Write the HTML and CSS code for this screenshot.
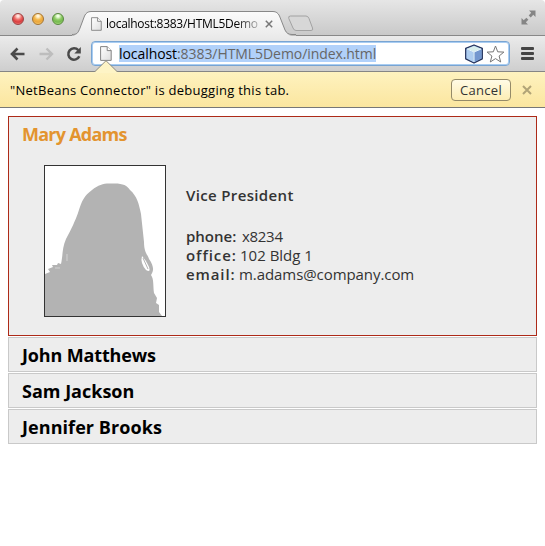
FILE: index.html
```
<!DOCTYPE html>
<html lang="en">
<head>
<meta charset="utf-8">
<title>localhost:8383/HTML5Demo/index.html</title>
<link rel="stylesheet" href="styles.css">
</head>
<body>
<svg width="0" height="0" class="defs" aria-hidden="true">
  <defs>
    <linearGradient id="tabfill" x1="0" y1="0" x2="0" y2="1"><stop offset="0" stop-color="#fbfbfb"/><stop offset="1" stop-color="#ebebeb"/></linearGradient>
    <linearGradient id="page" x1="0" y1="0" x2="1" y2="1"><stop offset="0" stop-color="#fff"/><stop offset="1" stop-color="#ddd"/></linearGradient>
    <symbol id="doc" viewBox="0 0 12 15"><path d="M.6.6h6.600l4 4v9.800H.6z" fill="url(#page)" stroke="#848484"/><path d="M7.200.6v4h4" fill="#fff" stroke="#848484"/></symbol>
  </defs>
</svg>
<header class="tabstrip">
  <div class="lights"><i class="light red"></i><i class="light amber"></i><i class="light green"></i></div>
  <div class="tab">
    <svg class="tab-shape" width="224" height="25" viewBox="0 0 224 25"><path d="M0 24.500C5 24.500 6 22 8 17L12.500 5Q14.500 .5 19 .5H201Q205.500 .5 207.500 5L213 19Q215 24.500 220 24.500H224V25H0Z" fill="url(#tabfill)"/><path d="M0 23.500C5 23.500 6 22 8 17L12.500 5Q14.500 .5 19 .5H201Q205.500 .5 207.500 5L213 19Q215 23.500 220 23.500H224" fill="none" stroke="#888"/></svg>
    <svg class="doc-tab" width="11" height="14"><use href="#doc"/></svg>
    <span class="tab-title">localhost:8383/HTML5Demo</span>
    <svg class="tab-close" width="8" height="8" viewBox="0 0 8 8"><path d="M.8.8l6.400 6.400M7.200.8L.8 7.200" stroke="#777" stroke-width="1.500"/></svg>
  </div>
  <svg class="newtab" width="28" height="17" viewBox="0 0 28 17"><path d="M3.500 1H19Q21 1 22 3.500L25.500 13Q26.500 15.500 24 15.500H9Q7 15.500 6 13L1.800 3.500Q1 1 3.500 1Z" fill="#d7d7d7" stroke="#a2a2a2"/></svg>
  <svg class="expand" width="15" height="15" viewBox="0 0 15 15"><path d="M8 .5h6.500V7l-2.200-2.200-2.600 2.600-2-2 2.500-2.600zM.5 8v6.500H7l-2.200-2.200 2.600-2.600-2-2-2.700 2.500z" fill="#858585"/></svg>
</header>
<nav class="toolbar">
  <svg class="back" width="15" height="14" viewBox="0 0 15 14"><path d="M7.500 1.500L2 7l5.500 5.500M2 7h12.500" fill="none" stroke="#4a4a4a" stroke-width="2.600"/></svg>
  <svg class="forward" width="15" height="14" viewBox="0 0 15 14"><path d="M7.500 1.500L13 7l-5.500 5.500M13 7H.5" fill="none" stroke="#bdbdbd" stroke-width="2.400"/></svg>
  <svg class="reload" width="16" height="16" viewBox="0 0 16 16"><path d="M12.300 4.200A5.700 5.700 0 1 0 13.300 10.200" fill="none" stroke="#4a4a4a" stroke-width="2.500"/><path d="M14.800 1v6.500H8.300z" fill="#4a4a4a"/></svg>
  <div class="omnibox">
    <svg class="doc-url" width="12" height="15"><use href="#doc"/></svg>
    <span class="url"><b>localhost</b>:8383/HTML5Demo/index.html</span>
    <svg class="cube" width="20" height="20" viewBox="0 0 20 20"><path d="M10 1l8.300 3.300v10.500L10 19l-8.300-4.200V4.300z" fill="#8fb0dd" stroke="#26345c" stroke-width="1.300" stroke-linejoin="round"/><path d="M10 2l7 2.700-7 3-7-3z" fill="#d9efed"/><path d="M2.600 5.400L9.500 8.300V18l-6.900-3.700z" fill="#aecdf0"/><path d="M10.200 8.300l7.200-2.900v8.900L10.200 18z" fill="#7397cf"/><path d="M3 5l7 3 7-3M10 8v10" fill="none" stroke="#e8f6fb"/></svg>
    <svg class="star" width="19" height="18" viewBox="0 0 19 18"><path d="M9.500 1l2.200 5.800 6.200.3-4.800 3.900 1.600 6-5.200-3.400L4.300 17l1.600-6-4.800-3.900 6.200-.3z" fill="#fff" stroke="#777" stroke-linejoin="round"/></svg>
  </div>
  <div class="menu"><i></i><i></i><i></i></div>
</nav>
<div class="infobar">
  <svg class="pointer" width="24" height="13" viewBox="0 0 24 13"><path d="M0 13V12L1 11.500 12 .7 23 11.500 24 12V13Z" fill="#fef4c6"/><path d="M0 11.500H1L12 .7 23 11.500h1" fill="none" stroke="#8c8a80"/></svg>
  <span class="message">"NetBeans Connector" is debugging this tab.</span>
  <button class="cancel"><span>Cancel</span></button>
  <svg class="dismiss" width="10" height="10" viewBox="0 0 10 10"><path d="M1 1l8 8M9 1L1 9" stroke="#b1a477" stroke-width="2"/></svg>
</div>
<main>
  <section class="card open">
    <h2><span class="n1">Mary Adams</span></h2>
    <div class="detail">
      <svg class="photo" width="120" height="150" viewBox="0 0 120 150"><path d="M0 108L5 106 3 103 8 101 7 99 12 99 13 97 16 98C18 89 17 82 21 73C27 62 30 55 33 47C37 34 39 30 47 24C54 18 60 17 67 17.500C77 17 82 19 85 24C92 30 94 38 96 48L99 76C99 87 103 89 104 93C109 100 109 105 106 109C109 113 108 120 109 127L112 132 111 137 114 139 114 146 117 150H0Z" fill="#b3b3b3"/><path d="M97 90q-2 7 4 14 5 3 3-3-3-7-7-11z" fill="#fff"/><path d="M98 92l5 11" stroke="#b3b3b3"/><path d="M10 102l5 0M22 88v7" stroke="#d2d2d2"/></svg>
      <div class="info">
        <p class="role"><b class="wrole">Vice President</b></p>
        <p><b class="w1">phone:</b><span class="v1">x8234</span></p>
        <p><b class="w2">office:</b><span class="v2">102 Bldg 1</span></p>
        <p><b class="w3">email:</b><span class="v3">m.adams@company.com</span></p>
      </div>
    </div>
  </section>
  <section class="card"><h2><span class="n2">John Matthews</span></h2></section>
  <section class="card"><h2><span class="n3">Sam Jackson</span></h2></section>
  <section class="card"><h2><span class="n4">Jennifer Brooks</span></h2></section>
</main>
</body>
</html>
```
FILE: styles.css
```
* { box-sizing: border-box; }
body { margin: 0; height: 546px; background: #fff; color: #000; overflow: hidden; font-family: "Open Sans", "Noto Sans", sans-serif; }
svg { display: block; flex: none; }
.defs { position: absolute; }
.tabstrip { height: 36px; display: flex; border-bottom: 1px solid #888; background: linear-gradient(#e6e6e6, #c9c9c9); border-radius: 4px 4px 0 0; }
.lights { display: flex; gap: 8px; padding: 13px 0 0 12px; width: 72px; flex: none; }
.light { width: 12px; height: 12px; border-radius: 50%; border: 1px solid; }
.red { background: radial-gradient(circle at 50% 20%, #ffe3dc 0 10%, #ee6b66 40%, #d93c3e 65%, #f99a91); border-color: #9b4142; }
.amber { background: radial-gradient(circle at 50% 20%, #fff5d9 0 10%, #f4b94c 40%, #eaa43b 65%, #ffe78c); border-color: #a57330; }
.green { background: radial-gradient(circle at 50% 20%, #f0ffe2 0 10%, #8fcc66 40%, #74b84f 65%, #ccf59b); border-color: #57883e; }
.tab { position: relative; width: 220px; height: 25px; margin-top: 11px; padding-left: 19px; display: flex; align-items: center; flex: none; }
.tab-shape { position: absolute; left: 0; top: 0; }
.doc-tab, .tab-title, .tab-close { position: relative; }
.tab-title { width: 154px; margin-left: 4px; font-size: 12px; line-height: 20px; white-space: nowrap; letter-spacing: -.28px; mask-image: linear-gradient(90deg, #000 84%, rgba(0,0,0,.2)); }
.tab-close { margin-left: 5px; }
.newtab { margin: 15px 0 0 -5px; }
.expand { margin: 10px 9px 0 auto; }
.toolbar { height: 36px; display: flex; align-items: center; padding-left: 10px; background: linear-gradient(#ebebeb, #cecece); border-bottom: 1px solid #858585; }
.forward { margin-left: 14px; }
.reload { margin-left: 12px; }
.omnibox { width: 419px; height: 25px; margin-left: 9px; display: flex; align-items: center; background: #fff; border: 1px solid #78a4d2; box-shadow: inset 0 0 0 1px #a9cdf2; border-radius: 4px; padding: 0 1px 0 8px; }
.url { margin-left: 7px; background: #b1d1fa; color: #666; height: 17px; line-height: 17px; font-size: 14px; letter-spacing: -.07px; width: 257px; white-space: nowrap; }
.url b { color: #000; font-weight: 400; }
.cube { margin-left: auto; }
.star { margin: 0 3px 0 2px; }
.menu { display: flex; flex-direction: column; gap: 2px; margin-left: 11px; }
.menu i { width: 13px; height: 3px; background: #454545; border-radius: 1px; }
.infobar { position: relative; height: 36px; display: flex; align-items: center; padding-left: 10px; background: linear-gradient(#fef2bf, #fbe69f); border-bottom: 1px solid #777; font-size: 13px; }
.pointer { position: absolute; left: 94px; top: -12px; }
.message { white-space: nowrap; letter-spacing: .27px; }
.cancel { width: 60px; height: 22px; padding: 0; margin-left: auto; border: 1px solid #958b69; border-radius: 4px; background: linear-gradient(#fffbe6, #fdedb4); font: 13px "Open Sans", sans-serif; line-height: 18px; letter-spacing: .3px; color: #333; }
.dismiss { margin: 0 13px 0 11px; }
main { padding: 8px; display: flex; flex-direction: column; gap: 1px; }
.card { height: 35px; border: 1px solid #c9c9c9; background: #ededed; padding-left: 13px; }
.open { height: 220px; border-color: #ad2a18; }
h2 { margin: 0; font: 700 18px/34px "Open Sans", sans-serif; white-space: nowrap; }
.n1 { letter-spacing: -.75px; }
.n2 { letter-spacing: -.15px; }
.n4 { letter-spacing: .07px; }
.open h2 { color: #e3942f; }
.detail { display: flex; padding: 14px 0 0 22px; }
.photo { box-sizing: content-box; border: 1px solid #333; background: #fff; }
.info { margin-left: 20px; padding-top: 21px; color: #333; font-size: 15px; line-height: 19px; white-space: nowrap; }
.info p { margin: 0; }
.info .role { margin-bottom: 22px; }
.info b { display: inline-block; font-weight: 600; }
.info .wrole { letter-spacing: .35px; }
.w1 { width: 56px; }
.w2 { width: 54px; letter-spacing: .9px; }
.w3 { width: 53px; letter-spacing: .9px; }
.v1 { letter-spacing: -.3px; }
.v3 { letter-spacing: -.07px; }
```
